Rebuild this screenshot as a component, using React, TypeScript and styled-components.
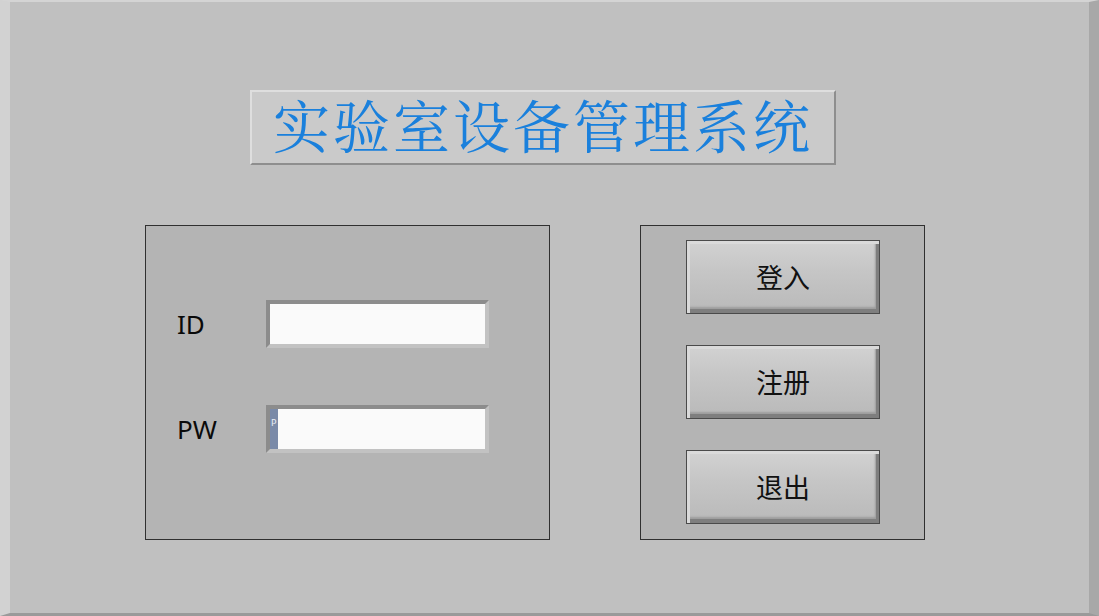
import styled, { createGlobalStyle } from "styled-components";

const GlobalStyle = createGlobalStyle`
  html, body {
    margin: 0;
    padding: 0;
    background: #c0c0c0;
  }
  * {
    box-sizing: border-box;
  }
`;

const Window = styled.div`
  width: 1099px;
  height: 616px;
  background: #c0c0c0;
  border-left: 10px solid #d2d2d2;
  border-top: 2px solid #d4d4d4;
  border-right: 10px solid #a8a8a8;
  border-bottom: 3px solid #9a9a9a;
  display: flex;
  flex-direction: column;
  align-items: flex-start;
  overflow: hidden;
`;

const TitleBox = styled.div`
  margin-top: 88px;
  margin-left: 240px;
  width: 586px;
  height: 75px;
  background: #cacaca;
  border-top: 2px solid #dedede;
  border-left: 2px solid #dedede;
  border-bottom: 2px solid #8e8e8e;
  border-right: 2px solid #8e8e8e;
  display: flex;
  align-items: center;
  justify-content: center;
  padding-bottom: 9px;
`;

const TitleText = styled.h1`
  margin: 0;
  font-family: "Noto Serif CJK SC", "Noto Sans CJK SC", serif;
  font-weight: 400;
  font-size: 57px;
  letter-spacing: 3px;
  line-height: 1;
  color: #1a80dc;
`;

const Panels = styled.div`
  display: flex;
  gap: 90px;
  margin-top: 60px;
  margin-left: 135px;
`;

const Panel = styled.div<{ $width: number }>`
  width: ${(p) => p.$width}px;
  height: 315px;
  background: #b4b4b4;
  border: 1px solid #303030;
`;

const FieldList = styled.div`
  display: flex;
  flex-direction: column;
  gap: 57px;
  padding: 74px 0 0 31px;
`;

const FieldRow = styled.div`
  display: flex;
  align-items: center;
`;

const Label = styled.span`
  width: 89px;
  font-family: "Noto Sans", "Open Sans", sans-serif;
  font-size: 26px;
  color: #0a0a0a;
`;

const InputFrame = styled.div`
  width: 223px;
  height: 48px;
  border-top: 4px solid #8c8c8c;
  border-left: 4px solid #8c8c8c;
  border-bottom: 4px solid #c2c2c2;
  border-right: 4px solid #c2c2c2;
  background: #fafafa;
  display: flex;
`;

const PassTag = styled.span`
  width: 8px;
  background: #7a8aa8;
  color: #e8ecf4;
  font-family: "DejaVu Sans", sans-serif;
  font-size: 9px;
  padding-top: 10px;
  padding-left: 1px;
  line-height: 1;
  overflow: hidden;
`;

const ButtonList = styled.div`
  display: flex;
  flex-direction: column;
  align-items: center;
  gap: 31px;
  padding: 14px 0 0 0;
`;

const Button = styled.button`
  width: 194px;
  height: 74px;
  border: 1px solid #4a4a4a;
  background: linear-gradient(#d2d2d2, #c6c6c6 40%, #b9b9b9);
  box-shadow:
    inset 3px 3px 0 #dadada,
    inset -3px -4px 0 #7e7e7e,
    inset -4px -6px 2px #9c9c9c;
  font-family: "Noto Sans CJK SC", sans-serif;
  font-size: 27px;
  color: #111;
  margin-left: 1px;
  cursor: pointer;
  padding: 0 0 2px 0;
`;

export default function App() {
  return (
    <>
      <GlobalStyle />
      <Window>
        <TitleBox>
          <TitleText>实验室设备管理系统</TitleText>
        </TitleBox>
        <Panels>
          <Panel $width={405}>
            <FieldList>
              <FieldRow>
                <Label>ID</Label>
                <InputFrame />
              </FieldRow>
              <FieldRow>
                <Label>PW</Label>
                <InputFrame>
                  <PassTag>P</PassTag>
                </InputFrame>
              </FieldRow>
            </FieldList>
          </Panel>
          <Panel $width={285}>
            <ButtonList>
              <Button>登入</Button>
              <Button>注册</Button>
              <Button>退出</Button>
            </ButtonList>
          </Panel>
        </Panels>
      </Window>
    </>
  );
}
